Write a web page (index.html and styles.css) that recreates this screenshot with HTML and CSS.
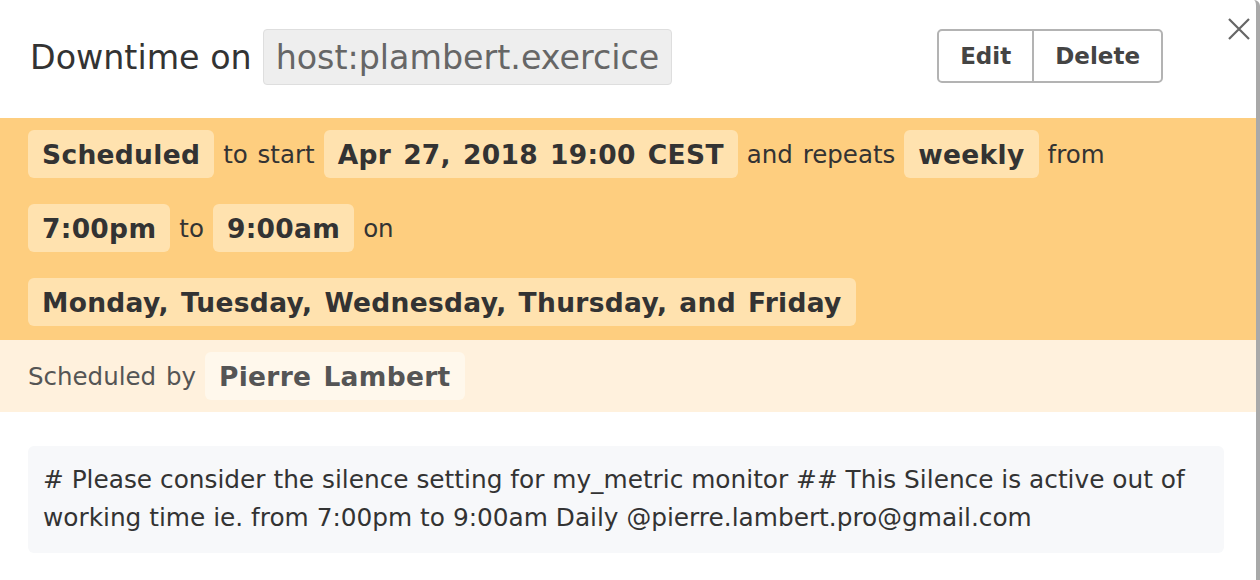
FILE: index.html
```html
<!DOCTYPE html>
<html>
<head>
<meta charset="utf-8">
<link rel="stylesheet" href="styles.css">
</head>
<body>
<div class="modal">
  <div class="header">
    <h1 class="title"><span>Downtime on</span><span class="scope">host:plambert.exercice</span></h1>
    <div class="btn-group">
      <button class="btn">Edit</button><button class="btn">Delete</button>
    </div>
  </div>
  <button class="close" aria-label="Close">
    <svg width="24" height="24" viewBox="0 0 24 24"><path d="M2 2 L22 22 M22 2 L2 22" stroke="#666" stroke-width="2.2" fill="none"/></svg>
  </button>
  <div class="schedule">
    <div class="line"><span class="chip">Scheduled</span><span class="word">to start</span><span class="chip">Apr 27, 2018 19:00 CEST</span><span class="word">and repeats</span><span class="chip">weekly</span><span class="word">from</span></div>
    <div class="line"><span class="chip">7:00pm</span><span class="word">to</span><span class="chip">9:00am</span><span class="word">on</span></div>
    <div class="line"><span class="chip">Monday, Tuesday, Wednesday, Thursday, and Friday</span></div>
  </div>
  <div class="owner">
    <span class="word">Scheduled by</span><span class="chip owner-chip">Pierre Lambert</span>
  </div>
  <div class="message">
    # Please consider the silence setting for my_metric monitor ## This Silence is active out of working time ie. from 7:00pm to 9:00am Daily @pierre.lambert.pro@gmail.com
  </div>
</div>
</body>
</html>
```

FILE: styles.css
```css
html, body {
  margin: 0;
  padding: 0;
  background: #fff;
}
body {
  font-family: "DejaVu Sans", "Noto Sans", sans-serif;
  color: #333;
}
.modal {
  position: relative;
  width: 1256px;
  height: 580px;
  border-right: 4px solid #a9a9a9;
  border-top-right-radius: 6px;
  box-sizing: content-box;
  overflow: hidden;
}
.header {
  display: flex;
  align-items: center;
  height: 118px;
  padding: 0 93px 4px 30px;
  box-sizing: border-box;
}
.title {
  margin: 0;
  font-size: 33.3px;
  font-weight: 400;
  color: #333;
  display: flex;
  align-items: center;
  gap: 11px;
  flex: 1;
}
.scope {
  display: inline-flex;
  align-items: center;
  height: 56px;
  padding: 0 12px;
  box-sizing: border-box;
  background: #eeeeee;
  border: 1px solid #dedede;
  border-radius: 4px;
  color: #666;
}
.btn-group {
  display: flex;
  margin-top: -2px;
}
.btn {
  font-family: inherit;
  font-size: 23px;
  font-weight: 700;
  color: #444;
  background: #fff;
  border: 2px solid #b3b3b3;
  height: 54px;
  padding: 0 21px;
  cursor: pointer;
}
.btn:first-child {
  border-radius: 5px 0 0 5px;
  border-right-width: 1px;
}
.btn:last-child {
  border-radius: 0 5px 5px 0;
  border-left-width: 1px;
}
.close {
  position: absolute;
  top: 17px;
  right: 5px;
  background: none;
  border: 0;
  padding: 0;
  width: 24px;
  height: 24px;
  cursor: pointer;
}
.close svg { display: block; }
.schedule {
  background: #fece7f;
  padding: 12px 28px 14px;
  display: flex;
  flex-direction: column;
  gap: 26px;
}
.line {
  display: flex;
  align-items: center;
  gap: 9px;
}
.chip {
  display: inline-flex;
  align-items: center;
  height: 48px;
  padding: 0 14px;
  box-sizing: border-box;
  background: #ffe2af;
  border-radius: 6px;
  font-size: 26.5px;
  font-weight: 700;
  color: #333;
  letter-spacing: 0.3px;
  word-spacing: 2.5px;
  white-space: pre;
}
.word {
  font-size: 24.5px;
  color: #333;
  word-spacing: 2px;
  white-space: pre;
}
.owner {
  background: #fff1dd;
  padding: 12px 28px;
  display: flex;
  align-items: center;
  gap: 9px;
}
.owner .word {
  color: #555;
}
.owner-chip {
  background: #fff8ec;
  color: #555;
}
.message {
  margin: 34px 32px 0 28px;
  background: #f7f8fa;
  border-radius: 6px;
  padding: 15px 15px 16px;
  font-size: 24.8px;
  line-height: 38px;
  color: #333;
}
```
